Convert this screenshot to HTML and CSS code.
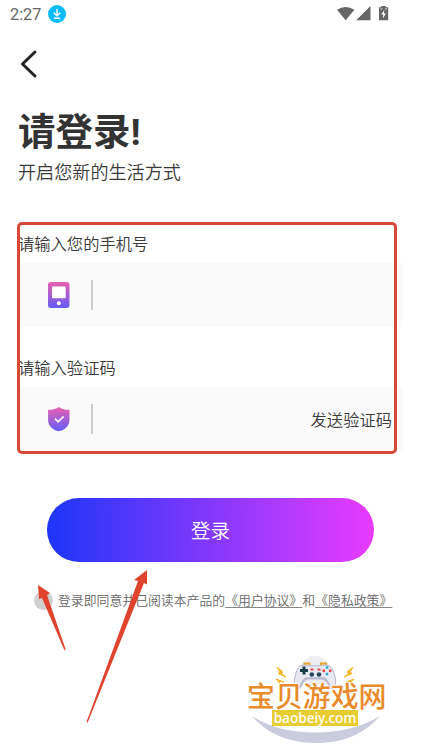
FILE: index.html
```html
<!DOCTYPE html>
<html lang="zh-CN">
<head>
<meta charset="utf-8">
<meta name="viewport" content="width=device-width, initial-scale=1">
<title>登录</title>
<link rel="stylesheet" href="styles.css">
</head>
<body>
<main class="screen">
  <header class="status">
    <span class="time">2:27</span>
    <svg class="download" width="18" height="18" viewBox="0 0 18 18"><circle cx="9" cy="9" r="9" fill="#0abcfd"/><path d="M9 4v6.500M5.800 7.700 9 10.800l3.200-3.100M5.900 13.200h6.200" fill="none" stroke="#fff" stroke-width="1.500"/></svg>
    <svg class="signals" width="54" height="18" viewBox="0 0 54 18"><path d="M0 4.800Q8.700-1 17.400 4.800L8.700 15.200ZM33.500 1v14.200H19.200ZM42 2.300h2.300V.9h4.500v1.400h2.400V15.200H42Z" fill="#666"/><path d="m47.300 4.800-3 4.800h2l-.4 3.800 3-4.900h-2z" fill="#fff"/><path d="M43.400 3.900h2M47.900 3.900h2" stroke="#fff" stroke-width=".8"/></svg>
  </header>
  <nav class="nav">
    <svg width="18" height="30" viewBox="0 0 18 30"><path d="M15 3 2.500 15 15 27" fill="none" stroke="#222" stroke-width="3" stroke-linecap="round" stroke-linejoin="round"/></svg>
  </nav>
  <h1 class="title">请登录<span class="mark">!</span></h1>
  <p class="subtitle">开启您新的生活方式</p>
  <form class="form">
    <div class="label">请输入您的手机号</div>
    <div class="field">
      <svg width="22" height="26" viewBox="0 0 22 26"><defs><linearGradient id="tint" x2="0" y2="1"><stop stop-color="#e85fb0"/><stop offset="1" stop-color="#655df7"/></linearGradient></defs><rect width="21.500" height="26" rx="3" fill="url(#tint)"/><rect x="4" y="4.500" width="13.700" height="11.700" rx="1" fill="#fff"/><circle cx="10.800" cy="21.300" r="2" fill="#fff"/></svg>
      <span class="divider"></span>
    </div>
    <div class="label">请输入验证码</div>
    <div class="field">
      <svg width="22" height="26" viewBox="0 0 22 26"><path d="M10.800 1Q14.500 4 21.500 3.800V14c0 6.500-5 10-10.700 11.300C5 24 .1 20.500.1 14V3.800Q7 4 10.800 1Z" fill="url(#tint)"/><path d="m7 12.600 3.100 3.300 5.500-5.400" fill="none" stroke="#fff" stroke-width="1.700"/></svg>
      <span class="divider"></span>
      <span class="send">发送验证码</span>
    </div>
    <button class="login" type="button">登录</button>
  </form>
  <div class="terms"><span class="radio"></span><span>登录即同意并已阅读本产品的<u>《用户协议》</u>和<u>《隐私政策》</u></span></div>
  <footer class="brand">
    <svg class="pad" width="44" height="34" viewBox="0 0 44 34"><circle cx="22" cy="15" r="15" fill="#eeeef0"/><path d="M11.500 9V7.500h5V9M28 9V7.500h5V9" stroke="#e6a62e" stroke-width="2" fill="none"/><path d="M7 10Q11 8 15 9.800H29Q33 8 37 10C41 13 45 28 41 32C37 34 35 24 30 22H14C9 24 7 34 3 32C-1 28 3 13 7 10Z" fill="#e9e9f1" stroke="#b7b8cc"/><path d="M1.500 29Q5 34 8 27Q11 20 15 21.500H29Q33 20 36 27Q39 34 42.500 29L41 33Q37 35 34 27Q31 23 28 23.500H16Q12 23 10 28Q7 35 3 33Z" fill="#b9bacf"/><path d="M11 10.500v8M7 14.500h8" stroke="#173c47" stroke-width="3"/><circle cx="18.800" cy="18.500" r="2.300" fill="#28475b"/><circle cx="26" cy="18.500" r="2.300" fill="#28475b"/><path d="M17.500 13.500h3M24.500 13.500h3" stroke="#e34a4c" stroke-width="2"/><circle cx="34" cy="11.500" r="1.500" fill="#36aeca"/><circle cx="34" cy="18" r="1.500" fill="#36aeca"/><circle cx="30.800" cy="14.700" r="1.500" fill="#e34a4c"/><circle cx="37.200" cy="14.700" r="1.500" fill="#e34a4c"/></svg>
    <svg class="sparks" width="80" height="18" viewBox="0 0 80 18"><path d="m2 0 6 5-1.500 1.500L11 10 3 6.500 5 5ZM78 0l-6 5 1.500 1.500L69 10l8-3.500L75 5ZM1 12l8 3-5-.5 1 2ZM79 12l-8 3 5-.5-1 2Z" fill="#f4b72c" stroke="#f4b72c"/></svg>
    <svg class="smile" width="128" height="28" viewBox="0 0 128 28"><path d="M0 0Q25 16.500 63 16.500T128 0C112 18 92 27 64 27S14 17 0 0Z" fill="#cacbdc"/></svg>
    <div class="brand-name">宝贝游戏网</div>
    <div class="domain">baobeiy.com</div>
  </footer>
  <div class="highlight"></div>
  <svg class="arrows" width="130" height="160" viewBox="0 0 130 160"><path d="m8 20 1 14 3-1 22.300 52 1.400-.5L17 30l3-2ZM117 5l-13 10 4 1L56.500 157l1.200.5L114 18l3 1.500Z" fill="#e0442e"/></svg>
</main>
</body>
</html>
```
FILE: styles.css
```css
* { box-sizing: border-box; }
body { margin: 0; background: #fff; color: #3a3a3a; font-family: "Noto Sans CJK SC", sans-serif; }
.screen { position: relative; height: 748px; overflow: hidden; }
.status { display: flex; align-items: center; height: 28px; padding: 0 30px 0 10px; }
.time { font: 16.3px/28px Roboto, sans-serif; color: #666; padding-top: 2px; }
.download { margin-left: 7px; }
.signals { margin-left: auto; }
.nav { height: 72px; padding: 21px 0 0 20px; }
.nav svg { display: block; }
.title { margin: 0; padding: 1px 0 0 18px; height: 58px; color: #333; font-size: 37.5px; line-height: 56px; font-weight: 700; }
.mark { font-family: Roboto, sans-serif; }
.subtitle { margin: 0; padding-left: 18px; height: 64px; font-size: 18.1px; line-height: 27px; font-weight: 350; }
.form { margin: 0 18px; }
.label { height: 41px; font-size: 16.3px; line-height: 43px; font-weight: 350; white-space: nowrap; }
.field { display: flex; align-items: center; width: 385px; height: 64px; padding: 0 11px 0 30px; background: #fafafa; }
.field + .label { margin-top: 19px; }
.divider { width: 2px; height: 30px; margin-left: 21px; background: #ccc; }
.send { margin: 0 0 1px auto; font-size: 16.3px; font-weight: 350; }
.login { display: block; width: 327px; height: 64px; margin: 47px 0 0 29px; padding: 0 0 2px; border: 0; border-radius: 32px; background: linear-gradient(90deg, #1d36f8, #e93bff); color: #fff; font: 350 19.5px "Noto Sans CJK SC", sans-serif; }
.terms { display: flex; align-items: center; height: 20px; margin: 28px 0 0 34px; color: #666; font-size: 12.86px; line-height: 20px; font-weight: 350; white-space: nowrap; }
.radio { width: 19px; height: 19px; margin: 0 5px 0 0; border-radius: 50%; background: #d0d0d0; }
.terms u { text-decoration-thickness: 1px; text-decoration-color: #888; text-underline-offset: 2px; }
.brand { position: relative; width: 140px; height: 93px; margin: 45px 0 0 247px; }
.pad { position: absolute; left: 46px; top: 1px; }
.sparks { position: absolute; left: 28px; top: 12px; }
.smile { position: absolute; left: 5px; top: 61px; }
.brand-name { position: relative; padding-top: 26px; color: #e98b2a; font-size: 27.9px; line-height: 29px; font-weight: 500; white-space: nowrap; text-shadow: 1px 0 #fff, -1px 0 #fff, 0 1px #fff, 0 -1px #fff; }
.domain { position: relative; width: 86px; height: 16px; margin: 0 0 0 25px; background: #e8cd32; color: #fff; font: 500 13.6px/15px "Noto Sans", sans-serif; text-align: center; }
.highlight { position: absolute; left: 17px; top: 222px; width: 380px; height: 232px; border: 3px solid #d64a35; border-radius: 5px; }
.arrows { position: absolute; left: 30px; top: 565px; }
```
